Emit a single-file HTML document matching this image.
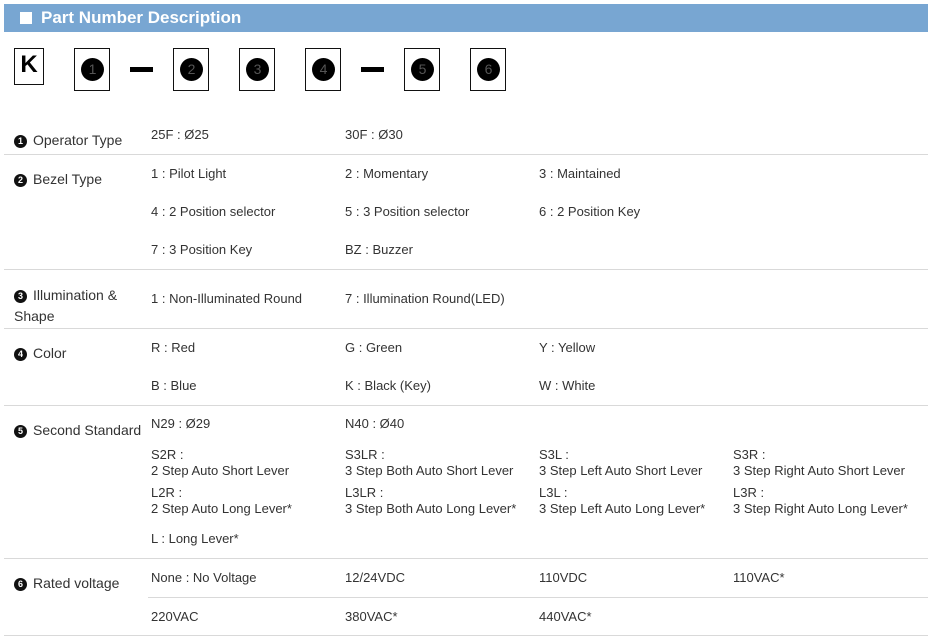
<!DOCTYPE html>
<html><head><meta charset="utf-8"><style>
body{margin:0;width:933px;height:637px;background:#fff;position:relative;overflow:hidden;font-family:"Liberation Sans","DejaVu Sans",sans-serif;color:#333;}
.a{position:absolute;white-space:nowrap;font-size:13px;line-height:16px}
.l{position:absolute;white-space:nowrap;font-size:14px;line-height:18px;left:14px}
.b{display:inline-block;width:13px;height:13px;border-radius:50%;background:#111;color:#fff;font-size:9px;line-height:13px;text-align:center;vertical-align:1px;margin-right:6px;font-weight:bold}
.h{position:absolute;left:4px;top:225px;height:1px;width:924px;background:#d9d9d9}
.bx{position:absolute;top:48px;width:34px;height:41px;border:1px solid #111}
.bx i{position:absolute;left:6px;top:9px;width:23px;height:23px;border-radius:50%;background:#000;color:#555;font-style:normal;font-size:14px;line-height:23px;text-align:center}
.d{position:absolute;top:67px;width:23px;height:5px;background:#000}
</style></head><body>
<div style="position:absolute;left:4px;top:4px;width:924px;height:28px;background:#78a6d2"></div>
<div style="position:absolute;left:20px;top:12px;width:12px;height:12px;background:#fff"></div>
<div style="position:absolute;left:41px;top:7px;color:#fff;font-size:17px;font-weight:bold;line-height:22px">Part Number Description</div>
<div style="position:absolute;left:14px;top:48px;width:28px;height:35px;border:1px solid #111;font-size:24px;font-weight:bold;line-height:32px;text-align:center;color:#000">K</div>
<div class="bx" style="left:74px"><i>1</i></div>
<div class="d" style="left:130px"></div>
<div class="bx" style="left:173px"><i>2</i></div>
<div class="bx" style="left:239px"><i>3</i></div>
<div class="bx" style="left:305px"><i>4</i></div>
<div class="d" style="left:361px"></div>
<div class="bx" style="left:404px"><i>5</i></div>
<div class="bx" style="left:470px"><i>6</i></div>

<div class="l" style="top:131px"><span class="b">1</span>Operator Type</div>
<div class="a" style="left:151px;top:127px">25F : Ø25</div>
<div class="a" style="left:345px;top:127px">30F : Ø30</div>
<div class="h" style="top:154px"></div>

<div class="l" style="top:170px"><span class="b">2</span>Bezel Type</div>
<div class="a" style="left:151px;top:166px">1 : Pilot Light</div>
<div class="a" style="left:345px;top:166px">2 : Momentary</div>
<div class="a" style="left:539px;top:166px">3 : Maintained</div>
<div class="a" style="left:151px;top:204px">4 : 2 Position selector</div>
<div class="a" style="left:345px;top:204px">5 : 3 Position selector</div>
<div class="a" style="left:539px;top:204px">6 : 2 Position Key</div>
<div class="a" style="left:151px;top:242px">7 : 3 Position Key</div>
<div class="a" style="left:345px;top:242px">BZ : Buzzer</div>
<div class="h" style="top:269px"></div>

<div class="l" style="top:285px;line-height:21px"><span class="b">3</span>Illumination &amp;<br>Shape</div>
<div class="a" style="left:151px;top:291px">1 : Non-Illuminated Round</div>
<div class="a" style="left:345px;top:291px">7 : Illumination Round(LED)</div>
<div class="h" style="top:328px"></div>

<div class="l" style="top:344px"><span class="b">4</span>Color</div>
<div class="a" style="left:151px;top:340px">R : Red</div>
<div class="a" style="left:345px;top:340px">G : Green</div>
<div class="a" style="left:539px;top:340px">Y : Yellow</div>
<div class="a" style="left:151px;top:378px">B : Blue</div>
<div class="a" style="left:345px;top:378px">K : Black (Key)</div>
<div class="a" style="left:539px;top:378px">W : White</div>
<div class="h" style="top:405px"></div>

<div class="l" style="top:421px"><span class="b">5</span>Second Standard</div>
<div class="a" style="left:151px;top:416px">N29 : Ø29</div>
<div class="a" style="left:345px;top:416px">N40 : Ø40</div>
<div class="a" style="left:151px;top:447px">S2R :<br>2 Step Auto Short Lever</div>
<div class="a" style="left:345px;top:447px">S3LR :<br>3 Step Both Auto Short Lever</div>
<div class="a" style="left:539px;top:447px">S3L :<br>3 Step Left Auto Short Lever</div>
<div class="a" style="left:733px;top:447px">S3R :<br>3 Step Right Auto Short Lever</div>
<div class="a" style="left:151px;top:485px">L2R :<br>2 Step Auto Long Lever*</div>
<div class="a" style="left:345px;top:485px">L3LR :<br>3 Step Both Auto Long Lever*</div>
<div class="a" style="left:539px;top:485px">L3L :<br>3 Step Left Auto Long Lever*</div>
<div class="a" style="left:733px;top:485px">L3R :<br>3 Step Right Auto Long Lever*</div>
<div class="a" style="left:151px;top:531px">L : Long Lever*</div>
<div class="h" style="top:558px"></div>

<div class="l" style="top:574px"><span class="b">6</span>Rated voltage</div>
<div class="a" style="left:151px;top:570px">None : No Voltage</div>
<div class="a" style="left:345px;top:570px">12/24VDC</div>
<div class="a" style="left:539px;top:570px">110VDC</div>
<div class="a" style="left:733px;top:570px">110VAC*</div>
<div class="h" style="top:597px;left:148px;width:780px"></div>
<div class="a" style="left:151px;top:609px">220VAC</div>
<div class="a" style="left:345px;top:609px">380VAC*</div>
<div class="a" style="left:539px;top:609px">440VAC*</div>
<div class="h" style="top:635px"></div>
</body></html>
